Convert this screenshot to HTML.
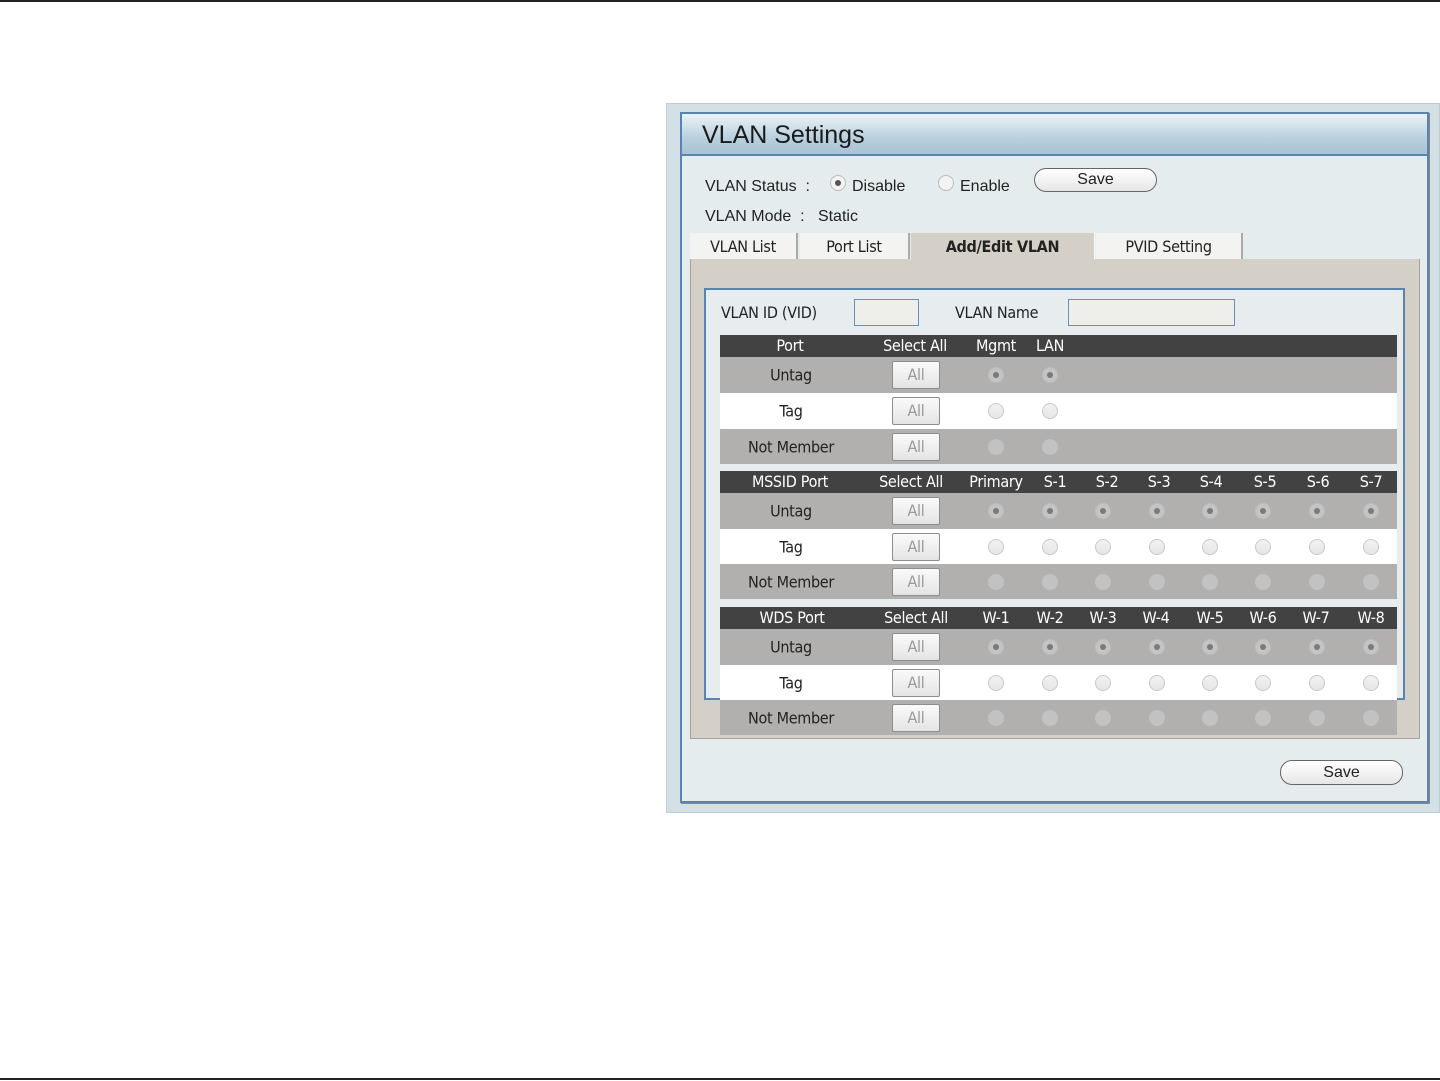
<!DOCTYPE html>
<html><head><meta charset="utf-8"><style>
*{box-sizing:border-box;margin:0;padding:0}
body{width:1440px;height:1081px;background:#fff;position:relative;overflow:hidden;font-family:"DejaVu Sans","Liberation Sans",sans-serif;color:#222}
.a{position:absolute}
.t{font-family:"DejaVu Sans Condensed","DejaVu Sans",sans-serif;font-size:16px;letter-spacing:-0.3px}
.row{position:absolute;left:720px;width:677px}
.g{background:#b1b0ae}.w{background:#fff}.h{background:#424242;color:#fff;height:22px}
.lbl{position:absolute;left:0;width:142px;text-align:center;top:50%;transform:translateY(-50%);white-space:nowrap}
.btn{position:absolute;left:172px;width:48px;height:28px;top:50%;margin-top:-14px;background:linear-gradient(#fafafa,#e4e4e4);border:1px solid #8d8d8d;border-radius:2px;text-align:center;line-height:26px;color:#999;font-size:16px}
.r{position:absolute;width:16px;height:16px;border-radius:50%;top:50%;margin-top:-8px;margin-left:-8px}
.u{background:#c4c4c4;box-shadow:inset 0 0 0 1px #bbb}
.u::after{content:"";position:absolute;left:5px;top:5px;width:6px;height:6px;border-radius:50%;background:#7a7a7a}
.tg{background:linear-gradient(#f2f2f2,#e6e6e6);border:1px solid #c9c9c9}
.n{background:#c2c2c2}
.hc{position:absolute;top:1px;transform:translateX(-50%);white-space:nowrap}
.s{font-family:'Liberation Sans',sans-serif;font-size:16px;color:#222}
</style></head><body>
<div class="a" style="left:0;top:0;width:1440px;height:2px;background:#222"></div>
<div class="a" style="left:0;top:1078px;width:1440px;height:2px;background:#222"></div>

<div class="a" style="left:666px;top:103px;width:774px;height:710px;background:#d3e0e6;border:1px solid #c0ccd2"></div>
<div class="a" style="left:680px;top:112px;width:749px;height:691px;background:#e5eced;border:2px solid #5a83ad;box-shadow:1px 1px 0 #888"></div>
<div class="a" style="left:682px;top:114px;width:745px;height:42px;background:linear-gradient(#ecf3f7,#b9d0de 60%,#a9c3d4);border-bottom:2px solid #5a83ad"></div>
<div class="a" style="left:702px;top:121px;font-family:'Liberation Sans',sans-serif;font-size:25px;color:#1a1a1a">VLAN Settings</div>

<div class="a s" style="left:705px;top:178px">VLAN Status&nbsp;&nbsp;:</div>
<div class="a" style="left:830px;top:175px;width:16px;height:16px;border-radius:50%;background:#f3f3f3;border:1px solid #bbb"><div style="position:absolute;left:4px;top:4px;width:6px;height:6px;border-radius:50%;background:#555"></div></div>
<div class="a s" style="left:852px;top:178px">Disable</div>
<div class="a" style="left:938px;top:175px;width:16px;height:16px;border-radius:50%;background:#f3f3f3;border:1px solid #bbb"></div>
<div class="a s" style="left:960px;top:178px">Enable</div>
<div class="a s" style="left:1034px;top:168px;width:123px;height:24px;border:1px solid #666;border-radius:12px;background:linear-gradient(#fff,#e6e6e6);text-align:center;line-height:22px">Save</div>
<div class="a s" style="left:705px;top:208px">VLAN Mode&nbsp;&nbsp;:&nbsp;&nbsp; Static</div>

<div class="a t" style="left:690px;top:233px;width:108px;height:26px;background:#f3f3f1;text-align:center;line-height:28px;border-right:2px solid #aaa">VLAN List</div>
<div class="a t" style="left:800px;top:233px;width:110px;height:26px;background:#f3f3f1;text-align:center;line-height:28px;border-right:2px solid #aaa">Port List</div>
<div class="a t" style="left:911px;top:233px;width:184px;height:27px;background:#d4d0c8;text-align:center;line-height:28px;font-weight:bold;border-right:1px solid #fff">Add/Edit VLAN</div>
<div class="a t" style="left:1096px;top:233px;width:147px;height:26px;background:#f3f3f1;text-align:center;line-height:28px;border-right:2px solid #aaa">PVID Setting</div>
<div class="a" style="left:690px;top:259px;width:730px;height:480px;background:#d4d0c8;border:1px solid #a6a39c;border-top:none"></div>
<div class="a" style="left:704px;top:288px;width:701px;height:412px;background:#e7edef;border:2px solid #5a83ad"></div>

<div class="a t" style="left:721px;top:303px">VLAN ID (VID)</div>
<div class="a" style="left:854px;top:299px;width:65px;height:27px;background:#eeeeea;border:1px solid #6a90b6"></div>
<div class="a t" style="left:955px;top:303px">VLAN Name</div>
<div class="a" style="left:1068px;top:299px;width:167px;height:27px;background:#eeeeea;border:1px solid #6a90b6"></div>

<div class="row h t" style="top:335px"><span class="hc" style="left:70px">Port</span><span class="hc" style="left:195px">Select All</span><span class="hc" style="left:276px">Mgmt</span><span class="hc" style="left:330px">LAN</span></div>
<div class="row g t" style="top:357px;height:36px"><span class="lbl">Untag</span><span class="btn">All</span><i class="r u" style="left:276px"></i><i class="r u" style="left:330px"></i></div>
<div class="row w t" style="top:393px;height:36px"><span class="lbl">Tag</span><span class="btn">All</span><i class="r tg" style="left:276px"></i><i class="r tg" style="left:330px"></i></div>
<div class="row g t" style="top:429px;height:35px"><span class="lbl">Not Member</span><span class="btn">All</span><i class="r n" style="left:276px"></i><i class="r n" style="left:330px"></i></div>

<div class="row h t" style="top:471px"><span class="hc" style="left:70px">MSSID Port</span><span class="hc" style="left:191px">Select All</span><span class="hc" style="left:276px">Primary</span><span class="hc" style="left:335px">S-1</span><span class="hc" style="left:387px">S-2</span><span class="hc" style="left:439px">S-3</span><span class="hc" style="left:491px">S-4</span><span class="hc" style="left:545px">S-5</span><span class="hc" style="left:598px">S-6</span><span class="hc" style="left:651px">S-7</span></div>
<div class="row g t" style="top:493px;height:36px"><span class="lbl">Untag</span><span class="btn">All</span><i class="r u" style="left:276px"></i><i class="r u" style="left:330px"></i><i class="r u" style="left:383px"></i><i class="r u" style="left:437px"></i><i class="r u" style="left:490px"></i><i class="r u" style="left:543px"></i><i class="r u" style="left:597px"></i><i class="r u" style="left:651px"></i></div>
<div class="row w t" style="top:529px;height:35px"><span class="lbl">Tag</span><span class="btn">All</span><i class="r tg" style="left:276px"></i><i class="r tg" style="left:330px"></i><i class="r tg" style="left:383px"></i><i class="r tg" style="left:437px"></i><i class="r tg" style="left:490px"></i><i class="r tg" style="left:543px"></i><i class="r tg" style="left:597px"></i><i class="r tg" style="left:651px"></i></div>
<div class="row g t" style="top:564px;height:35px"><span class="lbl">Not Member</span><span class="btn">All</span><i class="r n" style="left:276px"></i><i class="r n" style="left:330px"></i><i class="r n" style="left:383px"></i><i class="r n" style="left:437px"></i><i class="r n" style="left:490px"></i><i class="r n" style="left:543px"></i><i class="r n" style="left:597px"></i><i class="r n" style="left:651px"></i></div>

<div class="row h t" style="top:607px"><span class="hc" style="left:72px">WDS Port</span><span class="hc" style="left:196px">Select All</span><span class="hc" style="left:276px">W-1</span><span class="hc" style="left:330px">W-2</span><span class="hc" style="left:383px">W-3</span><span class="hc" style="left:436px">W-4</span><span class="hc" style="left:490px">W-5</span><span class="hc" style="left:543px">W-6</span><span class="hc" style="left:596px">W-7</span><span class="hc" style="left:651px">W-8</span></div>
<div class="row g t" style="top:629px;height:36px"><span class="lbl">Untag</span><span class="btn">All</span><i class="r u" style="left:276px"></i><i class="r u" style="left:330px"></i><i class="r u" style="left:383px"></i><i class="r u" style="left:437px"></i><i class="r u" style="left:490px"></i><i class="r u" style="left:543px"></i><i class="r u" style="left:597px"></i><i class="r u" style="left:651px"></i></div>
<div class="row w t" style="top:665px;height:35px"><span class="lbl">Tag</span><span class="btn">All</span><i class="r tg" style="left:276px"></i><i class="r tg" style="left:330px"></i><i class="r tg" style="left:383px"></i><i class="r tg" style="left:437px"></i><i class="r tg" style="left:490px"></i><i class="r tg" style="left:543px"></i><i class="r tg" style="left:597px"></i><i class="r tg" style="left:651px"></i></div>
<div class="row g t" style="top:700px;height:35px"><span class="lbl">Not Member</span><span class="btn">All</span><i class="r n" style="left:276px"></i><i class="r n" style="left:330px"></i><i class="r n" style="left:383px"></i><i class="r n" style="left:437px"></i><i class="r n" style="left:490px"></i><i class="r n" style="left:543px"></i><i class="r n" style="left:597px"></i><i class="r n" style="left:651px"></i></div>

<div class="a s" style="left:1280px;top:760px;width:123px;height:25px;border:1px solid #666;border-radius:12px;background:linear-gradient(#fff,#e6e6e6);text-align:center;line-height:23px">Save</div>
</body></html>
